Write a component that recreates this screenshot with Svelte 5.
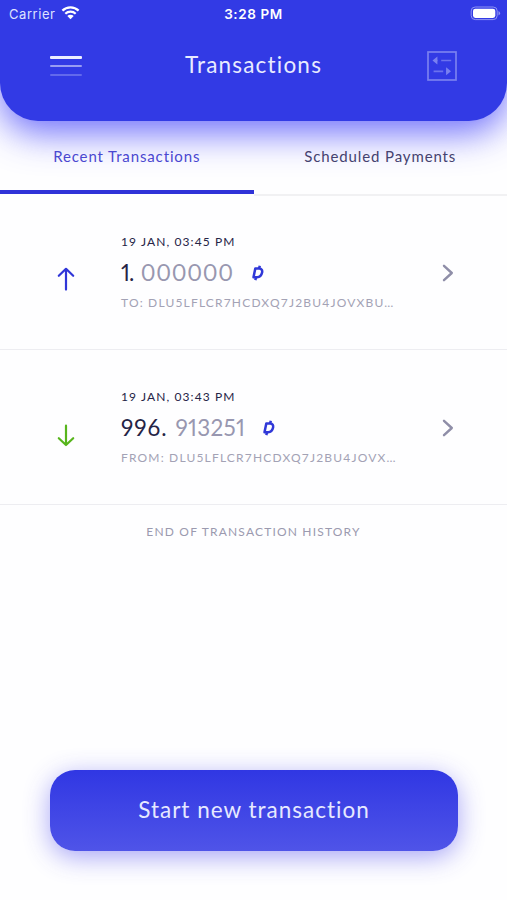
<script>
    let activeTab = $state('recent')

    const transactions = [
        { type: 'sent', date: '19 JAN, 03:45 PM', whole: '1.', decimals: '000000', label: 'TO:', address: 'DLU5LFLCR7HCDXQ7J2BU4JOVXBU…' },
        { type: 'received', date: '19 JAN, 03:43 PM', whole: '996.', decimals: '913251', label: 'FROM:', address: 'DLU5LFLCR7HCDXQ7J2BU4JOVX…' }
    ]
</script>

<main>
    <header>
        <div class="status">
            <div class="carrier">
                <span>Carrier</span>
                <svg width="19" height="14" viewBox="0 0 19 14">
                    <path d="M1.4 4.6a11.6 11.6 0 0 1 16.2 0" />
                    <path d="M4.3 7.8a7.5 7.5 0 0 1 10.4 0" />
                    <path class="dot" d="M9.5 13.2 6.3 10a4.6 4.6 0 0 1 6.4 0z" />
                </svg>
            </div>
            <div class="clock">3:28 PM</div>
            <div class="battery">
                <svg width="31" height="15" viewBox="0 0 31 15">
                    <rect class="shell" x="1.2" y="1" width="26" height="12.6" rx="4" />
                    <rect class="charge" x="3" y="2.7" width="22.3" height="9.2" rx="2.4" />
                    <path class="tip" d="M28.5 5v4.6q1.6-.8 1.6-2.3T28.5 5z" />
                </svg>
            </div>
        </div>
        <div class="bar">
            <button class="menu" aria-label="Menu">
                <i></i>
                <i></i>
                <i></i>
            </button>
            <h1>Transactions</h1>
            <button class="filter" aria-label="Filter">
                <svg width="30" height="30" viewBox="0 0 30 30">
                    <rect x="1" y="1" width="28" height="28" />
                    <path d="M9 9.5h1.5M14.2 9.5h10M6.6 20.3h9.6M19 20.3h1" />
                    <path class="head" d="M5.5 9.5l4.9-4v8zM24 20.3l-4.9-4v8z" />
                </svg>
            </button>
        </div>
    </header>

    <nav>
        <button class:active={activeTab === 'recent'} onclick={() => activeTab = 'recent'}>
            <span>Recent Transactions</span>
        </button>
        <button class:active={activeTab === 'scheduled'} onclick={() => activeTab = 'scheduled'}>
            <span>Scheduled Payments</span>
        </button>
    </nav>

    <section>
        {#each transactions as item}
            <div class="row {item.type}">
                <svg class="arrow" width="18" height="24" viewBox="0 0 18 24">
                    {#if item.type === 'sent'}
                        <path d="M9 22.6V2M1.8 8.8 9 1.8l7.2 7" />
                    {:else}
                        <path d="M9 2.7v19.1M1.8 15.2 9 22l7.2-6.8" />
                    {/if}
                </svg>
                <div class="details">
                    <p class="date">{item.date}</p>
                    <p class="amount">
                        <span class="whole">{item.whole}</span>
                        <span class="decimals">{item.decimals}</span>
                        <svg class="coin" width="14" height="16" viewBox="0 0 14 16">
                            <path d="M4.3 3.6h3.9q3.6.4 2.9 4-1 4.6-5 4.7H2.5z" />
                            <path d="M8.1 3.4l.7-2.6M5 12.5l-.7 2.6" />
                        </svg>
                    </p>
                    <p class="address">{item.label} {item.address}</p>
                </div>
                <svg class="chevron" width="12" height="18" viewBox="0 0 12 18">
                    <path d="M2 1.8 9.8 9 2 16.2" />
                </svg>
            </div>
        {/each}
        <p class="end">END OF TRANSACTION HISTORY</p>
    </section>

    <footer>
        <button class="start">Start new transaction</button>
    </footer>
</main>

<style>
:global(body) {
    margin: 0;
    background: #fff;
}

main {
    display: flex;
    flex-direction: column;
    height: 900px;
    overflow: hidden;
    background: #fefeff;
    color: #252446;
    font-family: Lato, sans-serif;
}

button {
    padding: 0;
    border: 0;
    background: none;
    color: inherit;
    font: inherit;
    cursor: pointer;
}

p, h1 {
    margin: 0;
    font-weight: 400;
}

svg {
    display: block;
    fill: none;
    flex: none;
}

header {
    box-sizing: border-box;
    height: 121px;
    flex: none;
    border-radius: 0 0 38px 38px;
    background: #323ae5;
    color: #fff;
    box-shadow: 0 12px 36px rgba(50, 50, 250, .7);
}

.status {
    display: grid;
    grid-template-columns: 1fr auto 1fr;
    align-items: center;
    height: 27px;
    padding: 0 6px 0 9px;
    font-family: Inter, sans-serif;
    font-size: 13px;
}

.carrier {
    display: flex;
    align-items: center;
    gap: 6px;
    color: #dfe2ff;
    letter-spacing: .55px;
}

.carrier svg {
    margin-top: -1px;
    stroke: #fff;
    stroke-width: 2.2;
}

.carrier .dot {
    fill: #fff;
    stroke: none;
}

.clock {
    margin-right: 3px;
    font-weight: 600;
    font-size: 13.5px;
    letter-spacing: .6px;
}

.battery {
    justify-self: end;
}

.shell {
    stroke: #9094f3;
}

.charge {
    fill: #fff;
}

.tip {
    fill: #9094f3;
}

.bar {
    display: grid;
    grid-template-columns: 1fr auto 1fr;
    align-items: center;
    height: 77px;
    padding: 0 50px;
}

.menu {
    display: flex;
    flex-direction: column;
    gap: 7px;
    width: 32px;
}

.menu i {
    height: 2px;
    border-radius: 1px;
    background: #989cf3;
}

.menu i:first-child {
    height: 3px;
    margin-bottom: -1px;
    background: #eceeff;
}

.menu i:last-child {
    background: #6269ec;
}

h1 {
    margin-top: -2px;
    font-size: 22.5px;
    letter-spacing: 1.2px;
    color: #e8ebff;
}

.filter {
    justify-self: end;
}

.filter svg {
    stroke: #7a80f0;
    stroke-width: 1.7;
}

.filter path {
    stroke: #6c72ee;
}

.filter .head {
    fill: #7a80f0;
    stroke: none;
}

nav {
    display: flex;
    height: 75px;
    flex: none;
}

nav button {
    box-sizing: border-box;
    flex: 1;
    padding-bottom: 4px;
    border-bottom: 2px solid #f1f1f3;
    font-size: 15px;
    letter-spacing: .87px;
    color: #45426f;
}

nav button.active {
    height: 73px;
    padding-bottom: 0;
    border-bottom: 4px solid #3033d8;
    color: #4a47d0;
}

section {
    margin-top: -1px;
}

.row {
    box-sizing: border-box;
    display: flex;
    align-items: center;
    height: 155px;
    padding: 0 53px 0 57px;
    border-bottom: 1px solid #ededf1;
}

.arrow {
    margin-top: 14px;
    stroke: #3036d8;
    stroke-width: 2.2;
    stroke-linecap: round;
    stroke-linejoin: round;
}

.received .arrow {
    margin-top: 16px;
    stroke: #57b51c;
}

.details {
    flex: 1;
    margin: 0 0 0 46px;
    white-space: nowrap;
}

.date {
    font-size: 12px;
    line-height: 16px;
    letter-spacing: 1.1px;
}

.amount {
    display: flex;
    align-items: center;
    margin-top: 9px;
    font-size: 22.5px;
    line-height: 28px;
    font-variant-numeric: proportional-nums;
}

.whole {
    letter-spacing: 1px;
}

.sent .whole {
    letter-spacing: -.8px;
}

.decimals {
    margin-left: 7px;
    letter-spacing: .7px;
    color: #9897b0;
}

.received .decimals {
    margin-left: 8px;
    letter-spacing: .3px;
}

.coin {
    margin-left: 17px;
    stroke: #3038d8;
    stroke-width: 2.5;
    stroke-linejoin: round;
}

.address {
    margin-top: 8px;
    font-size: 12px;
    line-height: 16px;
    letter-spacing: 1.18px;
    color: #a3a2b5;
}

.chevron {
    margin-top: 1px;
    stroke: #8f8ea8;
    stroke-width: 2.4;
    stroke-linecap: round;
    stroke-linejoin: round;
}

.end {
    margin-top: 19px;
    text-align: center;
    font-size: 12px;
    line-height: 16px;
    letter-spacing: 1.18px;
    color: #9b9aaf;
}

footer {
    margin-top: auto;
    padding: 0 49px 49px 50px;
}

.start {
    display: block;
    width: 100%;
    height: 81px;
    padding-bottom: 2px;
    border-radius: 25px;
    background: linear-gradient(#3037e3, #4f54e8);
    box-shadow: 0 6px 26px rgba(60, 55, 235, .45);
    color: #e6e9ff;
    font-size: 22.5px;
    letter-spacing: 1px;
}
</style>
